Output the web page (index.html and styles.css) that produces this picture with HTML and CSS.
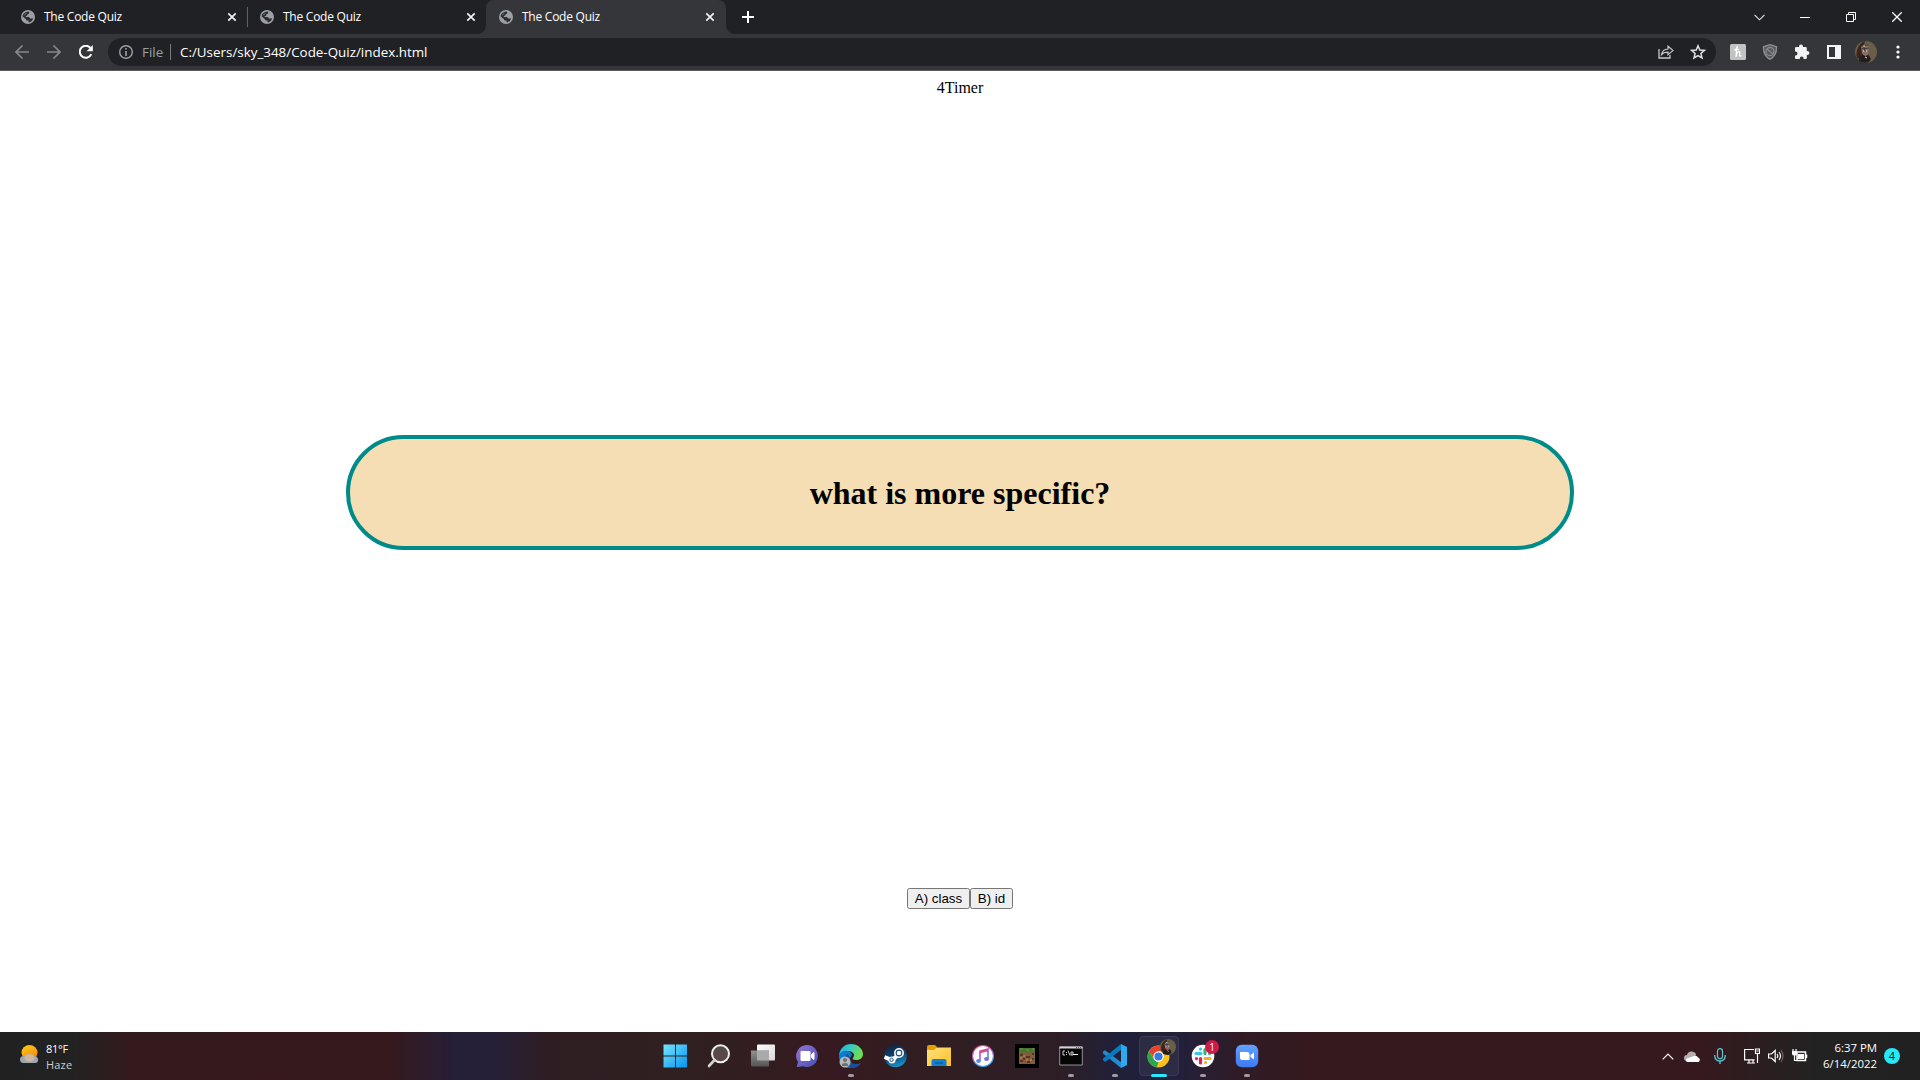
FILE: index.html
```html
<!DOCTYPE html>
<html lang="en">
<head>
<meta charset="utf-8">
<title>The Code Quiz</title>
<link rel="stylesheet" href="styles.css">
</head>
<body>
<svg class="defs" width="0" height="0" aria-hidden="true">
  <defs>
    <symbol id="globe" viewBox="0 0 14 14"><circle cx="7" cy="7" r="7" fill="#9aa0a6"/><path d="M7.600 1.500Q9 3 8 3.600L6.500 4.200Q6.700 5.700 5 6L4.500 7H7.600Q8.800 7 8.800 8.500H10.300L12 8.200Q11.500 11.500 8 12.400L7.500 12V10.600H6Q5 10.600 5 9.300L1.500 6.200Q2.200 2.200 7.600 1.500z" fill="#292b2e"/><path d="M2.600 5.700Q3.500 3 6 2.600L5.500 3.600 4.300 5z" fill="#5d6165"/></symbol>
    <symbol id="x" viewBox="0 0 10 10"><path d="M1.300 1.300l7.400 7.400M8.700 1.300L1.300 8.700" stroke="#f1f3f4" stroke-width="1.700"/></symbol>
    <linearGradient id="winGrad" x2="1" y2="1"><stop stop-color="#75e5ff"/><stop offset="1" stop-color="#0694ed"/></linearGradient>
    <linearGradient id="paneGrad" x2="1" y2="1"><stop stop-color="#fff"/><stop offset="1" stop-color="#d7d7d7"/></linearGradient>
    <linearGradient id="darkPane" y2="1" x2="0"><stop stop-color="#929090"/><stop offset="1" stop-color="#565555"/></linearGradient>
    <linearGradient id="chatGrad" x2="1" y2="1"><stop stop-color="#9a75d2"/><stop offset="1" stop-color="#4251bd"/></linearGradient>
    <linearGradient id="edgeTop" x2="1" y2=".3"><stop stop-color="#23a8de"/><stop offset=".5" stop-color="#37c8c5"/><stop offset="1" stop-color="#72dd4d"/></linearGradient>
    <linearGradient id="steamGrad" x2=".3" y2="1"><stop stop-color="#111d3b"/><stop offset=".6" stop-color="#104574"/><stop offset="1" stop-color="#148dc2"/></linearGradient>
    <linearGradient id="folderGrad" x2="1" y2="1"><stop stop-color="#ffe180"/><stop offset="1" stop-color="#fdc122"/></linearGradient>
    <linearGradient id="noteGrad" x2=".4" y2="1"><stop stop-color="#f44d65"/><stop offset=".5" stop-color="#b052c3"/><stop offset="1" stop-color="#2ba6ef"/></linearGradient>
    <linearGradient id="zoomGrad" x2="0" y2="1"><stop stop-color="#62a2ff"/><stop offset="1" stop-color="#3d79f2"/></linearGradient>
    <linearGradient id="sunGrad" x2=".5" y2="1"><stop stop-color="#ffcf0a"/><stop offset="1" stop-color="#f78916"/></linearGradient>
    <symbol id="portrait" viewBox="0 0 22 22"><circle cx="11" cy="11" r="11" fill="#6b5e48"/><path d="M2 17C0 10 4 2 10 0L8 9l-3 9z" fill="#3b241e"/><path d="M4 20c0-4 2-5 3-7h6l3 5-2 3q-5 2-10-1z" fill="#211f1d"/><path d="M6 7c0-4 7-5 8 0l-1 7-3 1-3-3z" fill="#81766d"/><path d="M6 8l8-1M8 3l2 7M6 5l7-1" stroke="#393432"/><path d="M8 13l3 .5" stroke="#cf4d45" stroke-width="1.800"/><path d="M8 10h1m2 0h1M10 16l2 1M8 5h2" stroke="#e0dddb"/></symbol>
  </defs>
</svg>

<header class="browser">
  <div class="tabstrip">
    <div class="tab"><svg width="14" height="14"><use href="#globe"/></svg><span class="tab-title">The Code Quiz</span><svg width="10" height="10"><use href="#x"/></svg></div>
    <div class="tab divided"><svg width="14" height="14"><use href="#globe"/></svg><span class="tab-title">The Code Quiz</span><svg width="10" height="10"><use href="#x"/></svg></div>
    <div class="tab active"><svg width="14" height="14"><use href="#globe"/></svg><span class="tab-title">The Code Quiz</span><svg width="10" height="10"><use href="#x"/></svg></div>
    <svg class="new-tab" width="12" height="12" viewBox="0 0 12 12"><path d="M0 6h12M6 0v12" stroke="#fff" stroke-width="2"/></svg>
    <div class="window-controls">
      <span><svg width="11" height="7" viewBox="0 0 11 7"><path d="M.5.8l5 5 5-5" fill="none" stroke="#e8e8e8" stroke-width="1.100"/></svg></span>
      <span><svg width="10" height="10" viewBox="0 0 10 10"><path d="M0 5.500h10" stroke="#fff"/></svg></span>
      <span><svg width="10" height="10" viewBox="0 0 10 10"><path d="M.5 2.500h7v7h-7zM2.500 2.500v-2h7v7h-2" fill="none" stroke="#fff"/></svg></span>
      <span><svg width="10" height="10" viewBox="0 0 10 10"><path d="M.3.3l9.400 9.400M9.700.3L.3 9.700" stroke="#fff" stroke-width="1.300"/></svg></span>
    </div>
  </div>
  <div class="toolbar">
    <div class="nav">
      <svg width="14" height="14" viewBox="0 0 14 14"><path d="M14 7H1M7.500.5L1 7l6.500 6.500" fill="none" stroke="#86888b" stroke-width="1.600"/></svg>
      <svg width="14" height="14" viewBox="0 0 14 14"><path d="M0 7h13M6.500.5L13 7l-6.500 6.500" fill="none" stroke="#86888b" stroke-width="1.600"/></svg>
      <svg width="14" height="14" viewBox="0 0 14 14"><path d="M12.300 9.200A6 6 0 1 1 11.300 2.800" fill="none" stroke="#fff" stroke-width="2"/><path d="M13.800 0v6.200H7.600z" fill="#fff"/></svg>
    </div>
    <div class="omnibox">
      <svg width="14" height="14" viewBox="0 0 14 14"><circle cx="7" cy="7" r="6.300" fill="none" stroke="#9aa0a6" stroke-width="1.400"/><path d="M7 3v1.600M7 6v5" stroke="#9aa0a6" stroke-width="1.600"/></svg>
      <span class="scheme">File</span><span class="url">C:/Users/sky_348/Code-Quiz/index.html</span>
      <svg class="share" width="16" height="14" viewBox="0 0 16 14"><path d="M1 4v9h11v-3" fill="none" stroke="#c5c8cc" stroke-width="1.300"/><path d="M3.500 9.700C4 6 6 4.300 10 4V1.200L15 5.600 10 9.800V7.200C7 7.200 5 7.800 3.500 9.700z" fill="none" stroke="#c5c8cc" stroke-width="1.200"/></svg>
      <svg width="16" height="16" viewBox="0 0 16 16"><path d="M8 1.800l1.800 4.200 4.600.4-3.500 3 1.100 4.500L8 11.500l-4 2.400 1.100-4.500-3.500-3L6.200 6z" fill="none" stroke="#dfe1e5" stroke-width="1.500"/></svg>
    </div>
    <div class="extensions">
      <svg width="16" height="16" viewBox="0 0 16 16"><rect width="16" height="16" rx="1.500" fill="#c2c2c2"/><path d="M4.500 5.500Q8 4.500 7.500 2.800 6.500 2 6.500 6L6 13Q7 8 8.800 7.500q1.700 0 .7 3-.5 2.500 2 1M4.500 6.500L9 5.500" fill="none" stroke="#fff" stroke-width="1.200"/></svg>
      <svg width="16" height="16" viewBox="0 0 16 16"><path d="M8 .7l6.500 2.100c.2 6-1.500 9.800-6.500 12.500C3 12.600 1.300 8.800 1.500 2.800z" fill="#55575a" stroke="#8d8f91" stroke-width="1.400"/><circle cx="8" cy="7.500" r="4" fill="none" stroke="#898b8d" stroke-width="1.300"/><path d="M5 5l6 5" stroke="#898b8d" stroke-width="1.300"/></svg>
      <svg width="16" height="16" viewBox="0 0 16 16"><path d="M1 4.300q0-1.300 1.300-1.300H5V2.500a2 2 0 0 1 4 0V3h2.500q1.300 0 1.300 1.300V7h.6a2 2 0 0 1 0 4h-.6v3q0 1-1 1H9.600v-.6a1.900 1.900 0 0 0-3.800 0v.6H2q-1 0-1-1v-2.600h.6a1.900 1.900 0 0 0 0-3.800H1z" fill="#f1f3f4"/></svg>
      <svg width="16" height="16" viewBox="0 0 16 16"><path fill-rule="evenodd" d="M1 1h14v14H1zm2 2v10h6V3z" fill="#f4f5f7"/></svg>
      <svg class="avatar" width="22" height="22"><use href="#portrait"/></svg>
      <svg width="4" height="14" viewBox="0 0 4 14"><circle cx="2" cy="2" r="1.600" fill="#fff"/><circle cx="2" cy="7" r="1.600" fill="#fff"/><circle cx="2" cy="12" r="1.600" fill="#fff"/></svg>
    </div>
  </div>
</header>

<main class="quiz">
  <div class="timer">4Timer</div>
  <h1 class="question">what is more specific?</h1>
  <div class="answers"><button class="answer">A) class</button><button class="answer answer-b">B) id</button></div>
</main>

<footer class="taskbar">
  <div class="weather">
    <svg width="19" height="18" viewBox="0 0 19 18"><ellipse cx="9.500" cy="7.500" rx="8" ry="7.500" fill="url(#sunGrad)"/><path d="M3.500 18a3.400 3.400 0 0 1 0-7q1-.1 2 .2Q6.500 8.700 9.700 8.700t4 2.600A3.400 3.400 0 0 1 15.500 18z" fill="#9aa7b5"/><ellipse cx="9.500" cy="12.800" rx="5" ry="3.700" fill="#d3b79c"/></svg>
    <div><div class="degrees">81°F</div><div class="sky">Haze</div></div>
  </div>
  <div class="apps">
    <div class="app"><svg width="24" height="24" viewBox="0 0 24 24"><path d="M.5.500H12v11H.5zM13 .5h11v11H13zM.5 12.500H12v11H.5zM13 12.500h11v11H13z" fill="url(#winGrad)"/></svg></div>
    <div class="app"><svg width="24" height="24" viewBox="0 0 24 24"><circle cx="13.500" cy="9.800" r="8.500" fill="#584848" stroke="#eee" stroke-width="2"/><path d="M7.500 16L2 22" stroke="#d4d1d1" stroke-width="2.600" stroke-linecap="round"/></svg></div>
    <div class="app"><svg width="24" height="24" viewBox="0 0 24 24"><rect x="6" y=".5" width="18" height="16" rx="1" fill="url(#paneGrad)"/><path d="M0 6.500h18v16H1q-1 0-1-1z" fill="url(#darkPane)"/><path d="M6 6.500h12v10H6z" fill="#aaa"/></svg></div>
    <div class="app"><svg width="24" height="24" viewBox="0 0 24 24"><path d="M12 1a11 11 0 1 1-4 21.300l-5.500.8q-1 0-.6-1l1.100-4A11 11 0 0 1 12 1z" fill="url(#chatGrad)"/><path d="M6 7.500h9v9H6zM16.500 10.500l2.500-2v7l-2.500-2z" fill="#fff" stroke="#fff" stroke-linejoin="round"/></svg></div>
    <div class="app running"><svg width="24" height="24" viewBox="0 0 24 24"><path d="M0 13C0 4 6 0 12 0c7 0 12 5 12 10 0 4-3 6-7 6-3 0-4-1-3-2 3-4-1-7-5-7-4 0-8 2-9 6z" fill="url(#edgeTop)"/><path d="M0 12c1-5 9-7 12-3 3 3-2 3-1 7 1 5 7 5 11 3-3 4-7 5-11 5C4 24 0 18 0 12z" fill="#087ccc"/><path d="M8 10c-5 5-1 14 5 14 4 0 7-2 9-5-4 2-10 2-11-3-1-3 0-4-3-6z" fill="#164f9b"/><circle cx="6" cy="18" r="5.500" fill="#b6b8ba"/><circle cx="6" cy="16" r="2" fill="#6d7072"/><path d="M2.700 22q0-3 3.300-3t3.300 3" fill="#6d7072"/></svg></div>
    <div class="app"><svg width="24" height="24" viewBox="0 0 24 24"><circle cx="12.500" cy="12" r="11.300" fill="url(#steamGrad)"/><path d="M1.500 13L9 16.200l7-6" fill="none" stroke="#fff" stroke-width="4"/><circle cx="16" cy="9" r="4.200" fill="#174b77" stroke="#fff" stroke-width="1.600"/><circle cx="16" cy="9" r="2.300" fill="#fff"/><circle cx="9" cy="16" r="2.800" fill="#d8e3ec" stroke="#fff" stroke-width="1.500"/><circle cx="8.500" cy="15.800" r="1.700" fill="none" stroke="#174b77" stroke-width=".8"/></svg></div>
    <div class="app"><svg width="24" height="24" viewBox="0 0 24 24"><path d="M0 3q0-2 2-2h6l2 2-2 4H0z" fill="#e59d00"/><path d="M0 6h7l2.500-2.500H24V22H0z" fill="url(#folderGrad)"/><path d="M4.500 22v-5q0-2 2-2h11q2 0 2 2v5z" fill="#1680d0"/><path d="M8 19h8" stroke="#0b5c9e" stroke-width="1.500"/></svg></div>
    <div class="app"><svg width="24" height="24" viewBox="0 0 24 24"><circle cx="12" cy="12" r="10.500" fill="#fff" stroke="url(#noteGrad)" stroke-width="1.200"/><path d="M9 17V7l8-2v10M9 8.500l8-2" fill="none" stroke="url(#noteGrad)" stroke-width="1.600"/><ellipse cx="7.500" cy="17" rx="2.400" ry="2" fill="#5c88ef"/><ellipse cx="15.500" cy="15" rx="2.400" ry="2" fill="#8264dd"/></svg></div>
    <div class="app"><svg width="24" height="24" viewBox="0 0 24 24"><path d="M0 0h24v24H0z" fill="#000"/><path d="M4 4h16v16H4z" fill="#855b3e"/><path d="M4 4h16v4h-2v2h-2V8h-3v2h-2V8H8v2H6V8H4z" fill="#47772f"/><path d="M5 11h3m3 2h4m2-3h2M5 17h3m4 1h3m2-3h2M8 15h2" stroke="#563524" stroke-width="2"/><path d="M8 12h2m5 4h2M5 14h2m4 2h2" stroke="#b38360" stroke-width="1.500"/><path d="M5 5h3m3 1h3m3-1h2" stroke="#64a33c"/></svg></div>
    <div class="app running"><svg width="24" height="24" viewBox="0 0 24 24"><path d="M.7 3h22.600v18H.7z" fill="#050505" stroke="#919191"/><path d="M.5 2.500h23v2H.5z" fill="#d5d5d5"/><path d="M17 3.500h1m1 0h1m1 0h1" stroke="#555"/><path d="M6 7H4v4h2M7.500 8v1m0 1v1M9 6.500l2 5M12 8h2v3h-2z" fill="none" stroke="#fff" stroke-width=".8"/><path d="M14 10.500h5" stroke="#fff"/></svg></div>
    <div class="app running"><svg width="24" height="24" viewBox="0 0 24 24"><path d="M0 7.500l2-1.300L18 18v6L0 9.500z" fill="#228bd0"/><path d="M0 16l2 2L18 6V0L0 14.500z" fill="#087ac0"/><path d="M18 0l6 3v18l-6 3z" fill="#31a7ed"/></svg></div>
    <div class="app running current"><svg width="24" height="24" viewBox="0 0 24 24"><circle cx="11.500" cy="12.500" r="11" fill="#fbc116"/><path d="M2 7a11 11 0 0 1 19 0h-9.500l-4.500 8z" fill="#e44332"/><path d="M2 7l5 8.500q2 2.500 4.500 2.500l-2 5.400A11 11 0 0 1 2 7z" fill="#2da44f"/><circle cx="11.500" cy="12.500" r="5.200" fill="#fff"/><circle cx="11.500" cy="12.500" r="4.100" fill="#367be7"/></svg><svg class="profile-badge" width="16" height="16" viewBox="0 0 22 22"><use href="#portrait" width="22" height="22"/></svg></div>
    <div class="app running"><svg width="24" height="24" viewBox="0 0 24 24"><circle cx="12" cy="12" r="11.300" fill="#fff"/><g fill="none" stroke-width="3.200" stroke-linecap="round"><path d="M5 9.500h5M9.500 5v.1" stroke="#36c5f0"/><path d="M14 5.500v4M18.500 9.500v.1" stroke="#2eb67d"/><path d="M14 14.500h5M14.500 18.500v.1" stroke="#ecb22e"/><path d="M9.500 14.500v4.500M5.500 14.500v.1" stroke="#e01e5a"/></g></svg><span class="count-badge">1</span></div>
    <div class="app running"><svg width="24" height="24" viewBox="0 0 24 24"><rect x=".8" y=".8" width="22.400" height="22.400" rx="6" fill="url(#zoomGrad)"/><path d="M5 8h7q2.500 0 2.500 2.500V16h-7Q5 16 5 13.500zM15.500 11L19 8.500v7L15.500 13z" fill="#fff"/></svg></div>
  </div>
  <div class="tray">
    <svg width="12" height="7" viewBox="0 0 12 7"><path d="M.7 6.300L6 1l5.300 5.300" fill="none" stroke="#fff" stroke-width="1.200"/></svg>
    <svg class="cloud" width="16" height="11" viewBox="0 0 16 11"><path d="M3 10a3 3 0 0 1 0-6Q4 0 8 .5t4 3.500l-3 4z" fill="#b8adb0"/><path d="M3 11a2 2 0 0 1 0-3.500L10 5q3-1 4 1.500a2.300 2.300 0 0 1-1 4.500z" fill="#fff"/></svg>
    <svg class="mic" width="12" height="16" viewBox="0 0 12 16"><rect x="3.500" y=".7" width="5" height="10" rx="2.500" fill="none" stroke="#5cc6d2" stroke-width="1.200"/><path d="M.7 7q0 6 5.300 6t5.300-6M6 13v3" fill="none" stroke="#5cc6d2" stroke-width="1.300"/></svg>
    <svg class="network" width="16" height="16" viewBox="0 0 16 16"><path d="M10 1.500H.6v10.300h10M3 15h8M5 12v3m4-3v3M11.500 1h4v4.500h-4zM13.500 5.500V15M12.500 3h2" fill="none" stroke="#fff" stroke-width="1.200"/></svg>
    <svg class="volume" width="16" height="14" viewBox="0 0 16 14"><path d="M.6 5h2.900l3.700-3.500v11L3.500 9H.6z" fill="none" stroke="#fff" stroke-width="1.200"/><path d="M9 5q1.500 2 0 4M11 3q3 4 0 8" fill="none" stroke="#fff" stroke-width="1.200"/><path d="M13 1q4 6 0 12" fill="none" stroke="#776067" stroke-width="1.200"/></svg>
    <svg class="battery" width="16" height="14" viewBox="0 0 16 14"><path d="M5 3h8.500v8.500H5zM14.500 5.500V9" fill="none" stroke="#fff" stroke-width="1.500"/><path d="M6 5h6v5H5zM0 2h5v3q0 1.500-2.500 1.500T0 5z" fill="#fff"/><path d="M1 0v2m3-2v2M2.500 6v5.500H6" fill="none" stroke="#fff" stroke-width="1.200"/></svg>
    <div class="clock"><div>6:37 PM</div><div>6/14/2022</div></div>
    <span class="alerts">4</span>
  </div>
</footer>
</body>
</html>
```
FILE: styles.css
```css
* { box-sizing: border-box; }
body {
  margin: 0;
  width: 1920px;
  height: 1080px;
  overflow: hidden;
  display: flex;
  flex-direction: column;
  background: #fff;
}
svg { display: block; flex: none; }
.defs { position: absolute; }

.browser {
  flex: none;
  height: 71px;
  background: #35363a;
  border-bottom: 1px solid #5a565d;
  font-family: "Open Sans", "Noto Sans", sans-serif;
}
.tabstrip {
  display: flex;
  align-items: center;
  height: 34px;
  padding-left: 8px;
  background: #202124;
}
.tab {
  position: relative;
  display: flex;
  align-items: center;
  width: 239px;
  height: 34px;
  padding: 0 10px 0 13px;
}
.tab-title {
  flex: 1;
  margin-left: 9px;
  color: #fff;
  font-size: 12px;
  line-height: 16px;
  letter-spacing: -.25px;
  white-space: nowrap;
}
.divided::before {
  content: "";
  position: absolute;
  left: 0;
  top: 7px;
  width: 1px;
  height: 20px;
  background: #5f6165;
}
.active {
  width: 240px;
  padding-right: 11px;
  background: #35363a;
  border-radius: 8px 8px 0 0;
}
.active::before, .active::after {
  content: "";
  position: absolute;
  bottom: 0;
  width: 8px;
  height: 8px;
}
.active::before { left: -8px; background: radial-gradient(circle at 0 0, #202124 7.5px, #35363a 8px); }
.active::after { right: -8px; background: radial-gradient(circle at 100% 0, #202124 7.5px, #35363a 8px); }
.new-tab { margin-left: 16px; }
.window-controls { display: flex; margin-left: auto; height: 28px; }
.window-controls span { display: flex; width: 46px; align-items: center; justify-content: center; }

.toolbar { display: flex; height: 36px; align-items: center; padding-left: 15px; }
.nav { display: flex; gap: 18px; width: 93px; }
.omnibox {
  display: flex;
  align-items: center;
  width: 1608px;
  height: 28px;
  padding: 0 10px 0 11px;
  border-radius: 14px;
  background: #202124;
  font-size: 13.4px;
  color: #fff;
}
.scheme {
  width: 29px;
  height: 16px;
  margin-left: 9px;
  line-height: 16px;
  color: #9aa0a6;
  border-right: 1px solid #77797d;
}
.url { margin-left: 9px; line-height: 16px; white-space: nowrap; }
.share { margin-left: auto; margin-right: 16px; }
.extensions { display: flex; align-items: center; gap: 16px; margin-left: 14px; }
.avatar { margin-left: -3px; }
.extensions svg:last-child { margin-left: 3px; }

.quiz {
  flex: 1;
  display: flex;
  flex-direction: column;
  align-items: center;
  padding-top: 8px;
  font-family: "Liberation Serif", serif;
}
.timer { height: 18px; font-size: 16px; line-height: 18px; }
.question {
  width: 1228px;
  height: 115px;
  margin: 338px 0;
  border: 4px solid #008b8b;
  border-radius: 57.5px;
  background: #f5deb3;
  font-size: 32px;
  line-height: 108px;
  text-align: center;
}
.answers { display: flex; }
.answer {
  width: 63px;
  height: 21px;
  padding: 0;
  border: 1px solid #767676;
  border-radius: 2.5px;
  background: #efefef;
  color: #000;
  font: 13.333px/17px "Liberation Sans", sans-serif;
}
.answer-b { width: 43px; }

.taskbar {
  flex: none;
  display: grid;
  grid-template-columns: 653px 616px 651px;
  height: 48px;
  color: #fff;
  font-family: "Open Sans", "Noto Sans", sans-serif;
  background: linear-gradient(90deg, #212121 0, #222 70px, #341a1d 130px, #36191d 390px, #251f38 455px, #251f38 490px, #2e1e22 550px, #302020 690px, #351a20 830px, #301e22 950px, #2d1e26 1060px, #20203a 1120px, #23203b 1180px, #301b25 1240px, #36191e 1320px, #36191e 1700px, #2b1e20 1760px, #222 1820px, #212121 1920px);
}
.weather { display: flex; padding: 9px 0 0 20px; gap: 7px; font-size: 11px; line-height: 16px; }
.weather svg { margin-top: 4px; }
.degrees { letter-spacing: -.3px; }
.sky { color: #ccc; letter-spacing: .2px; }
.apps { display: flex; }
.app { position: relative; display: flex; width: 44px; height: 48px; align-items: center; justify-content: center; }
.running::after {
  content: "";
  position: absolute;
  left: 19px;
  bottom: 3px;
  width: 6px;
  height: 3px;
  border-radius: 2px;
  background: #a29a9e;
}
.current { width: 40px; height: 40px; margin: 4px 2px; border: 1px solid #3b3a50; border-radius: 4px; background: #2d2c45; }
.current::after { left: 11px; bottom: -2px; width: 16px; background: #29e9fb; }
.profile-badge { position: absolute; left: 20px; top: 2px; }
.count-badge {
  position: absolute;
  left: 24px;
  top: 8px;
  width: 14px;
  height: 14px;
  border-radius: 50%;
  background: #d11847;
  font-size: 10px;
  line-height: 14px;
  text-align: center;
}
.tray { display: flex; align-items: center; justify-content: flex-end; padding-right: 20px; }
.cloud { margin-left: 10px; }
.mic { margin-left: 14px; }
.network { margin-left: 18px; }
.volume { margin-left: 8px; }
.battery { margin-left: 8px; }
.clock { width: 69px; font-size: 11.4px; line-height: 16px; text-align: right; white-space: nowrap; }
.alerts {
  width: 16px;
  height: 16px;
  margin-left: 7px;
  border-radius: 50%;
  background: #26e8f8;
  color: #202020;
  font-size: 11px;
  line-height: 16px;
  text-align: center;
}
```
